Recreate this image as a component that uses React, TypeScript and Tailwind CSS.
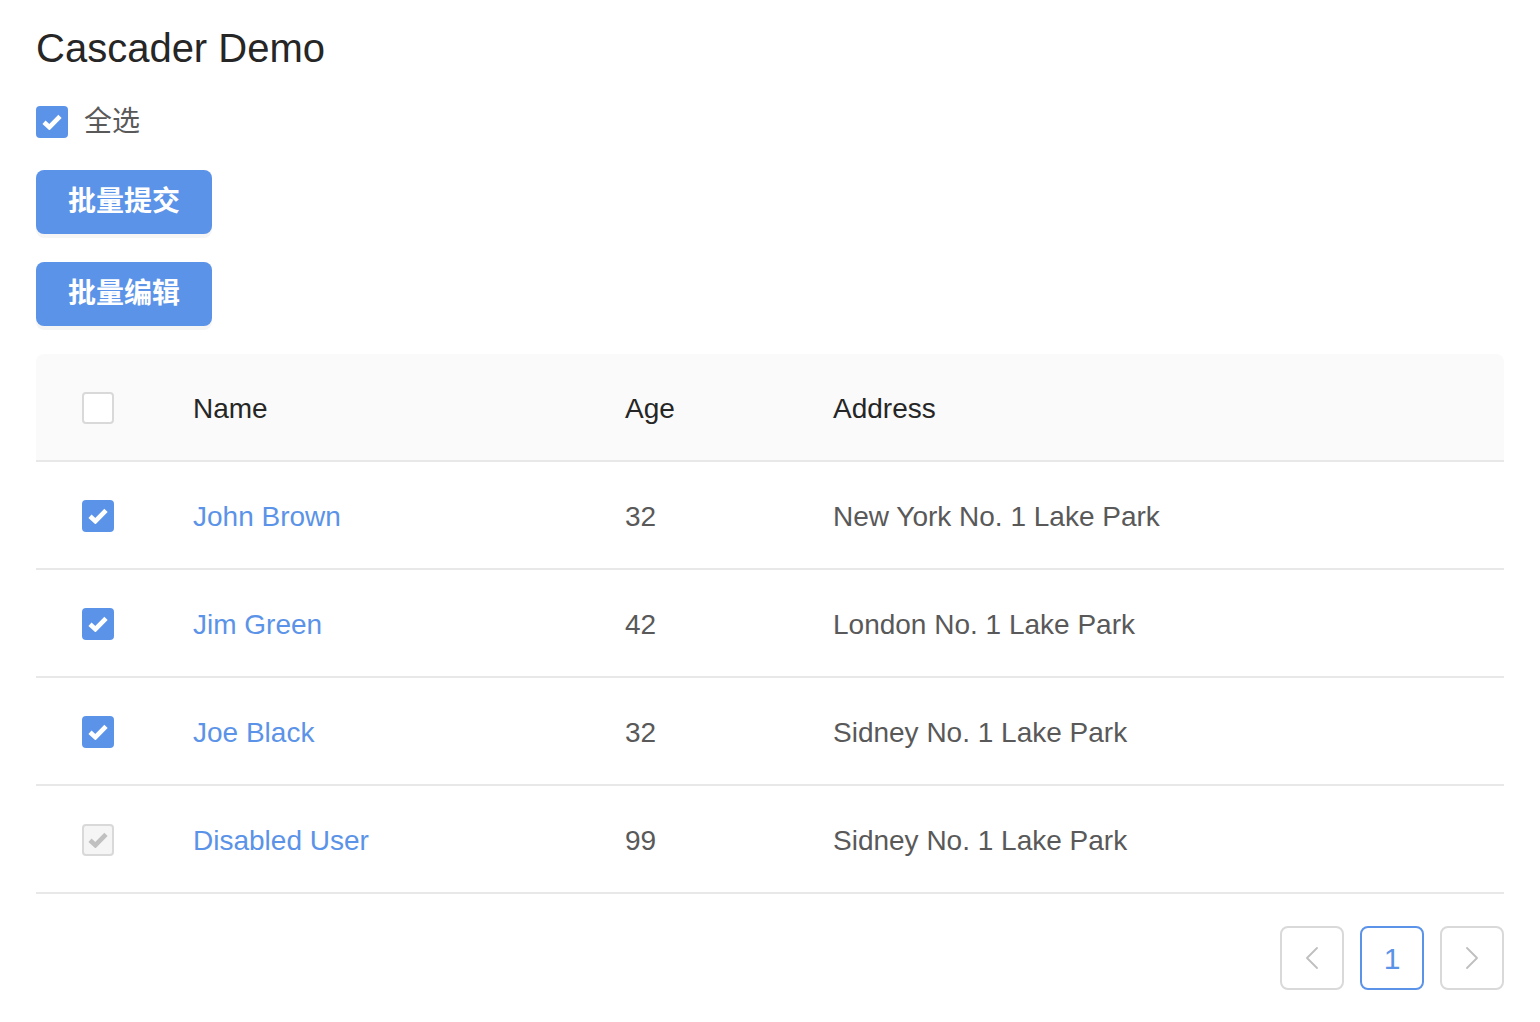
import { ChevronLeft, ChevronRight } from "lucide-react";

type User = { key: number; name: string; age: number; address: string; disabled?: boolean };

const users: User[] = [
  { key: 1, name: "John Brown", age: 32, address: "New York No. 1 Lake Park" },
  { key: 2, name: "Jim Green", age: 42, address: "London No. 1 Lake Park" },
  { key: 3, name: "Joe Black", age: 32, address: "Sidney No. 1 Lake Park" },
  { key: 4, name: "Disabled User", age: 99, address: "Sidney No. 1 Lake Park", disabled: true },
];

function Tick({ color }: { color: string }) {
  return (
    <svg width="20" height="16" viewBox="0 0 20 16" fill="none">
      <path d="M2 8.2 L7.4 13.2 L18 2.4" stroke={color} strokeWidth="4.6" />
    </svg>
  );
}

function Check({ checked, disabled }: { checked?: boolean; disabled?: boolean }) {
  if (disabled) {
    return (
      <span className="flex h-8 w-8 items-center justify-center rounded-[4px] border-2 border-[#d9d9d9] bg-[#f5f5f5]">
        <Tick color="#c0c0c0" />
      </span>
    );
  }
  if (checked) {
    return (
      <span className="flex h-8 w-8 items-center justify-center rounded-[4px] bg-[#5b93e8]">
        <Tick color="white" />
      </span>
    );
  }
  return <span className="block h-8 w-8 rounded-[4px] border-2 border-[#d9d9d9] bg-white" />;
}

export default function App() {
  return (
    <div className="min-h-screen bg-white px-9 pt-[22px] font-['Liberation_Sans','Noto_Sans_CJK_SC',sans-serif] text-[28px] text-[#595959]">
      <h1 className="text-[40px] leading-[52px] font-medium text-[#262626]">Cascader Demo</h1>

      <label className="mt-8 flex h-8 items-center gap-4">
        <Check checked />
        <span className="leading-8">全选</span>
      </label>

      <div className="mt-8 flex flex-col items-start gap-7">
        <button className="h-16 w-[176px] rounded-lg bg-[#5b93e8] text-[28px] font-bold text-white shadow-[0_4px_0_rgba(0,0,0,0.04)]">
          批量提交
        </button>
        <button className="h-16 w-[176px] rounded-lg bg-[#5b93e8] text-[28px] font-bold text-white shadow-[0_4px_0_rgba(0,0,0,0.04)]">
          批量编辑
        </button>
      </div>

      <table className="mt-[28px] w-full border-collapse">
        <thead>
          <tr className="border-b-2 border-[#e8e8e8] bg-[#fafafa]">
            <th className="w-[125px] rounded-tl-lg pt-[33px] pb-[31px]">
              <div className="flex justify-center pr-px">
                <Check />
              </div>
            </th>
            <th className="w-[432px] px-8 pt-[34px] pb-[30px] text-left leading-[42px] font-medium text-[#262626]">Name</th>
            <th className="w-[208px] px-8 pt-[34px] pb-[30px] text-left leading-[42px] font-medium text-[#262626]">Age</th>
            <th className="rounded-tr-lg px-8 pt-[34px] pb-[30px] text-left leading-[42px] font-medium text-[#262626]">Address</th>
          </tr>
        </thead>
        <tbody>
          {users.map((u) => (
            <tr key={u.key} className="border-b-2 border-[#e8e8e8]">
              <td className="pt-[33px] pb-[31px]">
                <div className="flex justify-center pr-px">
                  <Check checked={!u.disabled} disabled={u.disabled} />
                </div>
              </td>
              <td className="px-8 pt-[34px] pb-[30px] leading-[42px] text-[#5b93e8]">{u.name}</td>
              <td className="px-8 pt-[34px] pb-[30px] leading-[42px]">{u.age}</td>
              <td className="px-8 pt-[34px] pb-[30px] leading-[42px]">{u.address}</td>
            </tr>
          ))}
        </tbody>
      </table>

      <div className="mt-8 flex justify-end gap-4">
        <button className="flex h-16 w-16 items-center justify-center rounded-lg border-2 border-[#d9d9d9] text-[#bfbfbf]">
          <ChevronLeft size={40} strokeWidth={1.1} />
        </button>
        <button className="flex h-16 w-16 items-center justify-center rounded-lg border-2 border-[#5b93e8] text-[30px] text-[#5b93e8]">
          1
        </button>
        <button className="flex h-16 w-16 items-center justify-center rounded-lg border-2 border-[#d9d9d9] text-[#bfbfbf]">
          <ChevronRight size={40} strokeWidth={1.1} />
        </button>
      </div>
    </div>
  );
}
